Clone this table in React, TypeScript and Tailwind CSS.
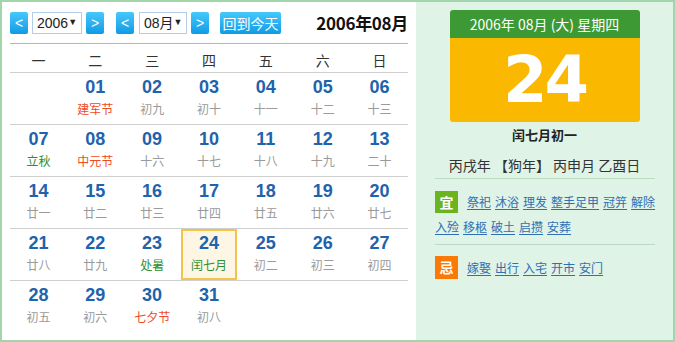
import React from 'react'

type Day = { d: string; l: string; c?: 'red' | 'green'; today?: boolean } | null

const weeks: Day[][] = [
  [null, { d: '01', l: '建军节', c: 'red' }, { d: '02', l: '初九' }, { d: '03', l: '初十' }, { d: '04', l: '十一' }, { d: '05', l: '十二' }, { d: '06', l: '十三' }],
  [{ d: '07', l: '立秋', c: 'green' }, { d: '08', l: '中元节', c: 'red' }, { d: '09', l: '十六' }, { d: '10', l: '十七' }, { d: '11', l: '十八' }, { d: '12', l: '十九' }, { d: '13', l: '二十' }],
  [{ d: '14', l: '廿一' }, { d: '15', l: '廿二' }, { d: '16', l: '廿三' }, { d: '17', l: '廿四' }, { d: '18', l: '廿五' }, { d: '19', l: '廿六' }, { d: '20', l: '廿七' }],
  [{ d: '21', l: '廿八' }, { d: '22', l: '廿九' }, { d: '23', l: '处暑', c: 'green' }, { d: '24', l: '闰七月', c: 'green', today: true }, { d: '25', l: '初二' }, { d: '26', l: '初三' }, { d: '27', l: '初四' }],
  [{ d: '28', l: '初五' }, { d: '29', l: '初六' }, { d: '30', l: '七夕节', c: 'red' }, { d: '31', l: '初八' }, null, null, null],
]

const weekdays = ['一', '二', '三', '四', '五', '六', '日']
const good = ['祭祀', '沐浴', '理发', '整手足甲', '冠笄', '解除', '入殓', '移柩', '破土', '启攒', '安葬']
const bad = ['嫁娶', '出行', '入宅', '开市', '安门']

function ArrowBtn({ dir }: { dir: '<' | '>' }) {
  return (
    <div className="w-[18px] h-[22px] rounded-[2px] bg-linear-to-b from-[#45c8fb] to-[#0a9be6] text-white text-[14px] leading-[22px] text-center font-['Liberation_Sans',sans-serif]">
      {dir}
    </div>
  )
}

function FakeSelect({ value, w }: { value: string; w: string }) {
  return (
    <div className={`${w} h-[22px] border border-[#b3cde6] bg-white flex items-center justify-between whitespace-nowrap pl-[4px] pr-[5px] text-[14px] text-[#222] font-['Liberation_Sans','Noto_Sans_CJK_SC',sans-serif]`}>
      <span>{value}</span>
      <span className="text-[9px]">▼</span>
    </div>
  )
}

function Tags({ list }: { list: string[] }) {
  return (
    <>
      {list.map(g => (
        <a key={g} className="inline-block whitespace-nowrap align-middle mr-[4px] text-[#2f6fb3] underline underline-offset-2">
          {g}
        </a>
      ))}
    </>
  )
}

export default function App() {
  return (
    <div className="w-[675px] h-[342px] border-2 border-[#a3d5ad] flex font-['Noto_Sans_CJK_SC',sans-serif] overflow-hidden">
      {/* left: month grid */}
      <div className="w-[414px] bg-white px-[8px] pt-[10px]">
        <div className="flex items-center h-[22px]">
          <ArrowBtn dir="<" />
          <div className="ml-[4px]"><FakeSelect value="2006" w="w-[50px]" /></div>
          <div className="ml-[4px]"><ArrowBtn dir=">" /></div>
          <div className="ml-[12px]"><ArrowBtn dir="<" /></div>
          <div className="ml-[5px]"><FakeSelect value="08月" w="w-[48px]" /></div>
          <div className="ml-[4px]"><ArrowBtn dir=">" /></div>
          <div className="ml-[11px] w-[61px] h-[22px] rounded-[2px] bg-linear-to-b from-[#45c8fb] to-[#0a9be6] text-white text-[14px] leading-[22px] text-center">
            回到今天
          </div>
          <div className="ml-auto text-[17px] font-bold text-[#111] tracking-[-0.3px]">2006年08月</div>
        </div>
        <div className="mt-[9px] w-[398px] border-t border-[#8cc1ea]">
          <div className="grid grid-cols-7 pt-[6px] pb-[2px] border-b border-[#cfcfcf]">
            {weekdays.map(w => (
              <div key={w} className="text-center text-[14px] leading-[20px] text-[#333]">{w}</div>
            ))}
          </div>
          {weeks.map((wk, i) => (
            <div key={i} className={`grid grid-cols-7 h-[52px] ${i < weeks.length - 1 ? 'border-b border-[#cfcfcf]' : ''}`}>
              {wk.map((day, j) => (
                <div
                  key={j}
                  className={`flex flex-col items-center ${day?.today ? 'border-2 border-[#f3c44a] bg-[#fdf6e4] pt-[2px]' : 'pt-[4px]'}`}
                >
                  {day && (
                    <>
                      <div className="text-[18px] leading-[20px] font-bold text-[#1e63ac] font-['Liberation_Sans',sans-serif]">{day.d}</div>
                      <div
                        className={`mt-[4px] text-[12px] leading-[16px] ${
                          day.c === 'red' ? 'text-[#ee4b25]' : day.c === 'green' ? 'text-[#2f8f2f]' : 'text-[#9a9a9a]'
                        }`}
                      >
                        {day.l}
                      </div>
                    </>
                  )}
                </div>
              ))}
            </div>
          ))}
        </div>
      </div>

      {/* right: day detail */}
      <div className="flex-1 bg-[#dff3e6] pt-[8px] flex flex-col items-center">
        <div className="w-[190px] rounded-[3px] overflow-hidden">
          <div className="h-[28px] bg-[#3d9934] text-white text-[14px] leading-[28px] text-center">2006年 08月 (大) 星期四</div>
          <div className="h-[84px] bg-[#fbb800] text-white text-[64px] leading-[84px] font-bold text-center tracking-[-3px] font-['DejaVu_Sans',sans-serif]">
            24
          </div>
        </div>
        <div className="mt-[3px] text-[13px] leading-[20px] font-bold text-[#222]">闰七月初一</div>
        <div className="mt-[10px] text-[14px] leading-[20px] text-[#333] whitespace-pre">丙戌年 【狗年】 丙申月 乙酉日</div>
        <div className="w-[220px] mt-[3px] border-t border-[#bcd9c4]" />
        <div className="self-stretch pl-[19px] pr-[6px] pt-[9px] text-[12px] leading-[23px]">
          <span className="inline-block align-middle w-[23px] h-[22px] bg-[#6cb41f] text-white font-bold text-[14px] leading-[22px] text-center mr-[9px]">宜</span>
          <Tags list={good} />
        </div>
        <div className="w-[220px] mt-[6px] border-t border-[#bcd9c4]" />
        <div className="self-stretch pl-[19px] pr-[6px] pt-[8px] text-[12px] leading-[23px]">
          <span className="inline-block align-middle w-[23px] h-[23px] bg-[#fb7a05] text-white font-bold text-[14px] leading-[23px] text-center mr-[9px]">忌</span>
          <Tags list={bad} />
        </div>
      </div>
    </div>
  )
}
